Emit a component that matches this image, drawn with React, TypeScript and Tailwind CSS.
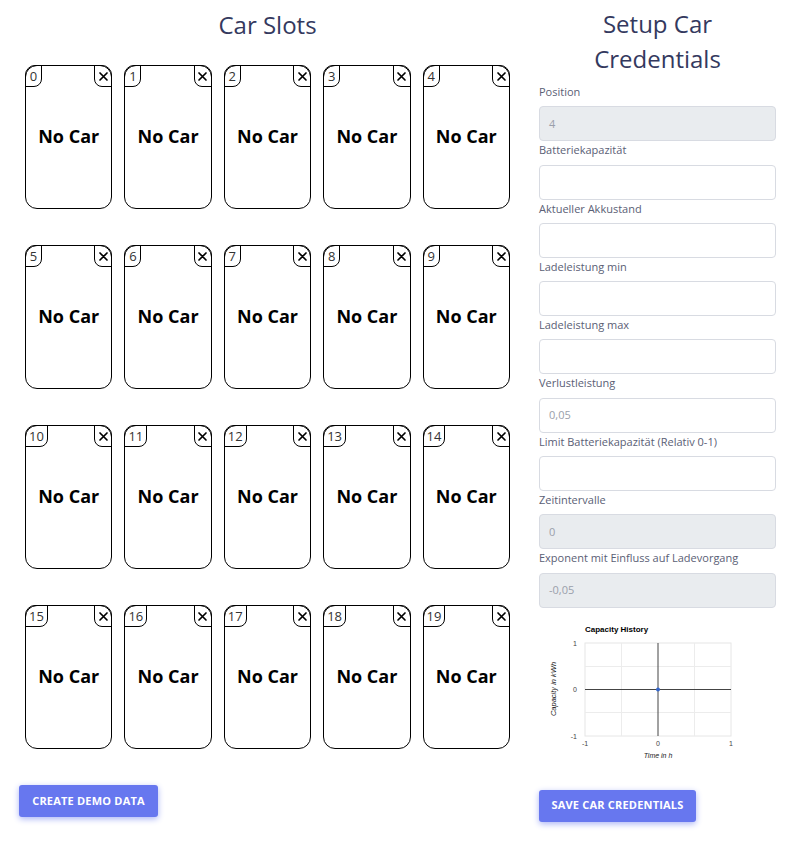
import React from "react";

const fields: { label: string; value: string; disabled?: boolean }[] = [
  { label: "Position", value: "4", disabled: true },
  { label: "Batteriekapazität", value: "" },
  { label: "Aktueller Akkustand", value: "" },
  { label: "Ladeleistung min", value: "" },
  { label: "Ladeleistung max", value: "" },
  { label: "Verlustleistung", value: "0,05" },
  { label: "Limit Batteriekapazität (Relativ 0-1)", value: "" },
  { label: "Zeitintervalle", value: "0", disabled: true },
  { label: "Exponent mit Einfluss auf Ladevorgang", value: "-0,05", disabled: true },
];

function Slot({ n }: { n: number }) {
  return (
    <div className="relative h-[144px] rounded-[12px] border border-black bg-white flex items-center justify-center">
      <div className="absolute top-[-1px] left-[-1px] h-[22px] min-w-[17px] px-[3px] border border-black rounded-tl-[10px] rounded-br-[8px] text-[13px] leading-[20px] text-[#333] text-center">
        {n}
      </div>
      <div className="absolute top-[-1px] right-[-1px] h-[22px] w-[18px] border border-black rounded-tr-[10px] rounded-bl-[8px] flex items-center justify-center">
        <svg width="11" height="11" viewBox="0 0 11 11">
          <path d="M2 2 L9 9 M9 2 L2 9" stroke="#000" strokeWidth="1.7" strokeLinecap="round" />
        </svg>
      </div>
      <span className="text-[18px] font-bold text-black -mt-[1px]">No Car</span>
    </div>
  );
}

function Chart() {
  const font = "Arial, 'Liberation Sans', sans-serif";
  return (
    <svg width="210" height="155" viewBox="0 0 210 155" className="block">
      <text x="46" y="17" fontSize="8" fontWeight="bold" fontFamily={font} fill="#000">
        Capacity History
      </text>
      <rect x="46" y="28" width="146" height="93" fill="none" stroke="#e6e6e6" strokeWidth="1" />
      <line x1="82.5" y1="28" x2="82.5" y2="121" stroke="#ececec" />
      <line x1="155.5" y1="28" x2="155.5" y2="121" stroke="#ececec" />
      <line x1="46" y1="51.5" x2="192" y2="51.5" stroke="#ececec" />
      <line x1="46" y1="97.5" x2="192" y2="97.5" stroke="#ececec" />
      <line x1="119" y1="28" x2="119" y2="121" stroke="#444" strokeWidth="1" />
      <line x1="46" y1="74.5" x2="192" y2="74.5" stroke="#444" strokeWidth="1" />
      <circle cx="119" cy="74.5" r="2" fill="#3366cc" />
      <text x="38" y="31" fontSize="7" fontFamily={font} fill="#444" textAnchor="end">1</text>
      <text x="38" y="77" fontSize="7" fontFamily={font} fill="#444" textAnchor="end">0</text>
      <text x="38" y="124" fontSize="7" fontFamily={font} fill="#444" textAnchor="end">-1</text>
      <text x="46" y="131" fontSize="7" fontFamily={font} fill="#444" textAnchor="middle">-1</text>
      <text x="119" y="131" fontSize="7" fontFamily={font} fill="#444" textAnchor="middle">0</text>
      <text x="192" y="131" fontSize="7" fontFamily={font} fill="#444" textAnchor="middle">1</text>
      <text x="119" y="143" fontSize="7" fontStyle="italic" fontFamily={font} fill="#222" textAnchor="middle">
        Time in h
      </text>
      <text
        x="0"
        y="0"
        fontSize="7.5"
        fontStyle="italic"
        fontFamily={font}
        fill="#111"
        textAnchor="middle"
        transform="translate(17 74) rotate(-90)"
      >
        Capacity in kWh
      </text>
    </svg>
  );
}

export default function App() {
  return (
    <div
      className="w-[808px] min-h-[850px] bg-white flex"
      style={{ fontFamily: "'Open Sans', 'Noto Sans', sans-serif" }}
    >
      <div className="w-[535px] shrink-0 flex flex-col">
        <h1 className="mt-[7px] text-center text-[24px] leading-[35px] text-[#34395e] font-normal">Car Slots</h1>
        <div className="mt-[23px] px-[25px] grid grid-cols-5 gap-x-[12px] gap-y-[36px]">
          {Array.from({ length: 20 }, (_, i) => (
            <Slot key={i} n={i} />
          ))}
        </div>
        <div className="mt-[36px] pl-[19px]">
          <button className="h-[32px] w-[139px] rounded-[3px] bg-[#6777ef] text-white text-[11px] font-bold tracking-[0.2px] shadow-[0_2px_6px_#acb5f6]">
            CREATE DEMO DATA
          </button>
        </div>
      </div>
      <div className="ml-[4px] w-[237px] shrink-0 flex flex-col">
        <h1 className="mt-[6px] text-center text-[24px] leading-[35px] text-[#34395e] font-normal">
          Setup Car
          <br />
          Credentials
        </h1>
        <div className="mt-[7px] flex flex-col">
          {fields.map((f) => (
            <div key={f.label} className="flex flex-col">
              <label className="text-[11px] leading-[17.3px] text-[#5a6075]">{f.label}</label>
              <div
                className={`mt-[6px] h-[35px] rounded-[4px] border border-[#d8dbe2] px-[9px] flex items-center text-[11px] text-[#9a9fab] ${
                  f.disabled ? "bg-[#e9ecef]" : "bg-white"
                }`}
              >
                {f.value}
              </div>
            </div>
          ))}
        </div>
        <div className="mt-[7px]">
          <Chart />
        </div>
        <div className="mt-[20px]">
          <button className="h-[32px] w-[157px] rounded-[3px] bg-[#6777ef] text-white text-[11px] font-bold tracking-[0.2px] shadow-[0_2px_6px_#acb5f6]">
            SAVE CAR CREDENTIALS
          </button>
        </div>
      </div>
    </div>
  );
}
